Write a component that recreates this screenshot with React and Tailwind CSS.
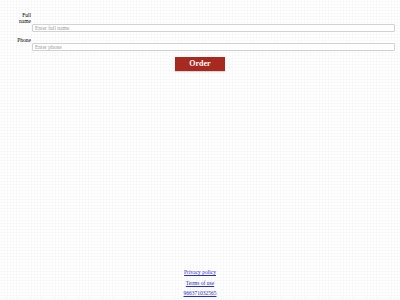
export default function App() {
  return (
    <div className="w-[400px] h-[300px] flex flex-col bg-white bg-[radial-gradient(circle,#f6f6f6_0.8px,transparent_1.3px)] bg-[length:3px_3px] font-['Liberation_Serif',serif] text-black">
      <div className="flex flex-col pt-[12px] pl-[15px] pr-[5px]">
        <div className="flex items-end">
          <div className="w-[17px] text-right text-[5.5px] leading-[6px] pb-[8px] pr-[1px]">Full name</div>
          <input
            className="flex-1 h-[8px] border border-[#d2d2d2] rounded-[1px] bg-white text-[5.5px] px-[2px] outline-none placeholder:text-[#9a9a9a]"
            placeholder="Enter full name"
          />
        </div>
        <div className="flex items-end mt-[5px]">
          <div className="w-[17px] text-right text-[5.5px] leading-[6px] pb-[8px] pr-[1px]">Phone</div>
          <input
            className="flex-1 h-[8px] border border-[#d2d2d2] rounded-[1px] bg-white text-[5.5px] px-[2px] outline-none placeholder:text-[#9a9a9a]"
            placeholder="Enter phone"
          />
        </div>
        <div className="flex justify-center mt-[6px] pr-[10px]">
          <button className="w-[50px] h-[14px] bg-[#a8291f] text-white font-bold text-[8px] leading-[14px] shadow-[0_1px_1px_rgba(0,0,0,0.15)]">
            Order
          </button>
        </div>
      </div>
      <div className="mt-auto flex flex-col items-center pb-[4px] text-[5.5px] leading-[6px] text-[#2a2acc] gap-[4.5px]">
        <a href="#" className="underline">Privacy policy</a>
        <a href="#" className="underline">Terms of use</a>
        <a href="#" className="underline">966371032565</a>
      </div>
    </div>
  );
}
